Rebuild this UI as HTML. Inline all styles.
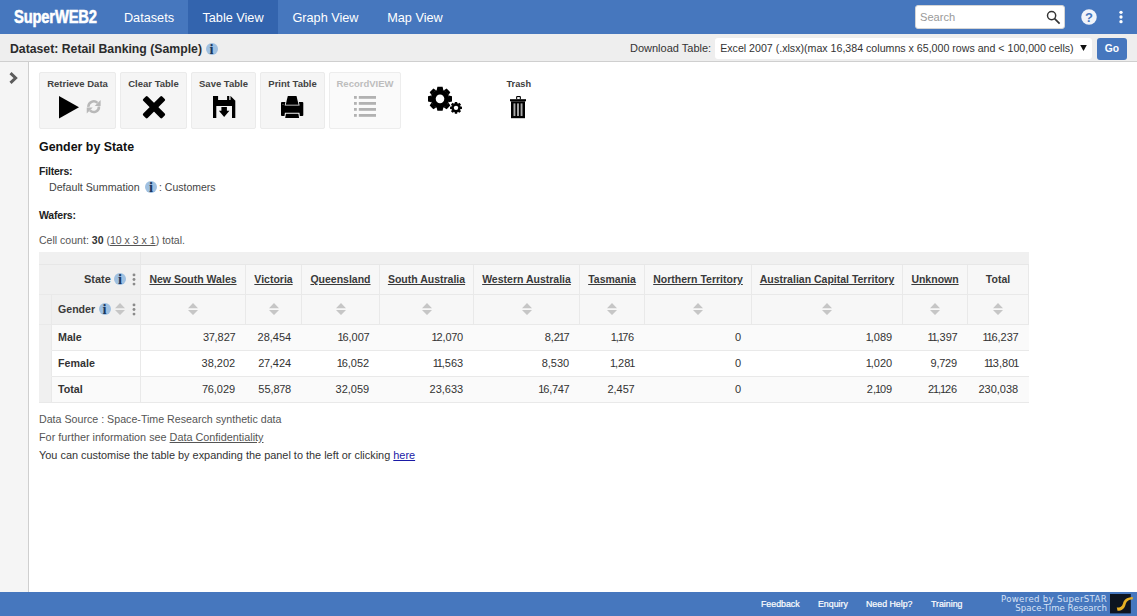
<!DOCTYPE html>
<html lang="en">
<head>
<meta charset="utf-8">
<title>SuperWEB2 - Table View</title>
<style>
*{box-sizing:border-box;margin:0;padding:0}
html,body{width:1137px;height:616px;overflow:hidden;background:#fff}
body{font-family:"Liberation Sans",sans-serif;font-size:11px;color:#333;position:relative}
a{color:inherit}
.abs{position:absolute;white-space:nowrap}
/* top nav */
#nav{position:absolute;left:0;top:0;width:1137px;height:34px;background:#4677be}
#logo{position:absolute;left:13.6px;top:5.5px;font-weight:bold;font-size:18px;line-height:22px;color:#fff;-webkit-text-stroke:.55px #fff;transform:scaleX(.818);transform-origin:0 50%;letter-spacing:-.2px}
.tab{position:absolute;top:0;height:34px;line-height:36px;color:#fff;font-size:12.7px;text-align:center}
.tab.on{background:#3364ae}
#search{position:absolute;left:915px;top:5px;width:150px;height:24px;background:#fff;border-radius:3px;border:1px solid #d5d5d5}
#search span{position:absolute;left:4px;top:0;line-height:22px;font-size:11.1px;color:#9a9a9a}
/* sub header */
#sub{position:absolute;left:0;top:34px;width:1137px;height:28px;background:#eeeeee;border-bottom:1px solid #cfcfcf}
#dsname{position:absolute;left:10px;top:1px;line-height:29px;font-size:12.25px;font-weight:bold;color:#2b2b2b}
#dl{position:absolute;left:630px;top:0;line-height:29px;font-size:11px;color:#333}
#sel{position:absolute;left:715.4px;top:3.8px;width:376.8px;height:21.7px;background:#fff;border-radius:3px;font-size:10.63px;line-height:20.4px;padding-left:4.8px;color:#333;overflow:hidden;white-space:nowrap}
#go{position:absolute;left:1097px;top:3.8px;width:30px;height:22px;background:#4677be;border-radius:3px;color:#fff;font-weight:bold;font-size:10.3px;line-height:21px;text-align:center}
/* sidebar */
#side{position:absolute;left:0;top:62px;width:29px;height:530px;background:#f5f5f5;border-right:1px solid #cfcfcf}
/* toolbar */
.btn{position:absolute;top:72px;height:57px;background:#f5f5f5;border:1px solid #ebebeb;border-radius:2px;text-align:center;font-size:9.5px;color:#424242;font-weight:bold}
.btn .lb{display:block;margin-top:5px;line-height:12px}
.btn.dis{background:#fafafa;border-color:#ededed;color:#bdbdbd}
.ico{position:absolute}
/* footer */
#foot{position:absolute;left:0;top:592px;width:1137px;height:24px;background:#4677be}
#foot .fl{position:absolute;top:0;line-height:24px;color:#fff;font-size:8.8px;-webkit-text-stroke:.2px #fff}

/* content */
.t{position:absolute;white-space:nowrap;line-height:14px}
.info{position:absolute;width:12px;height:12px;border-radius:6px;background:#9fc0e1;color:#1b3860;font-family:"Liberation Serif",serif;font-weight:bold;font-size:14.5px;line-height:12.8px;text-align:center;overflow:hidden}
/* table */
.c{position:absolute;border-right:1px solid #e9e9e9;border-bottom:1px solid #e9e9e9}
.h{background:#f7f7f7;text-align:center;font-weight:bold;font-size:10.5px;color:#3a3a3a;line-height:29px;white-space:nowrap}
.h u{text-decoration:underline}
.n{text-align:right;padding-right:10.8px;border-right:none;font-size:11px;color:#333;line-height:25px;white-space:nowrap}
.r1{background:#fafafa}.r2{background:#fff}
.rl{text-align:left;padding-left:6px;font-weight:bold;font-size:10.7px;line-height:25px;color:#333}
.sa{position:absolute;width:10px;height:12px;left:50%;margin-left:-5px;top:8px}
.kb{position:absolute;width:4px;height:13px}
#foot .pw{position:absolute;right:30px;white-space:nowrap;font-family:"DejaVu Sans",sans-serif;font-size:8.6px;line-height:11px;color:#d6e1f5;letter-spacing:.45px}
.n i{font-style:normal;margin:0 -1.1px}.n b{font-weight:normal;margin:0 -.4px}
</style>
</head>
<body>
<div id="nav">
  <div id="logo">SuperWEB2</div>
  <div class="tab" style="left:110px;width:78px">Datasets</div>
  <div class="tab on" style="left:188px;width:90px">Table View</div>
  <div class="tab" style="left:278px;width:95px">Graph View</div>
  <div class="tab" style="left:373px;width:84px">Map View</div>
  <div id="search"><span>Search</span></div>
  <svg class="ico" style="left:1046px;top:9.5px" width="15" height="15" viewBox="0 0 15 15"><circle cx="5.6" cy="5.6" r="4.1" fill="none" stroke="#333" stroke-width="1.45"/><path d="M8.6 8.6 L13.6 13.6" stroke="#333" stroke-width="1.7" stroke-linecap="butt"/></svg>
  <svg class="ico" style="left:1081px;top:9px" width="16" height="16" viewBox="0 0 16 16"><circle cx="8" cy="8" r="7.75" fill="#f1f4fa"/><text x="8" y="12.6" text-anchor="middle" font-family="Liberation Sans, sans-serif" font-weight="bold" font-size="13" fill="#4677be">?</text></svg>
  <svg class="ico" style="left:1118px;top:10px" width="6" height="14" viewBox="0 0 6 14"><circle cx="3" cy="2.3" r="1.65" fill="#fff"/><circle cx="3" cy="7" r="1.65" fill="#fff"/><circle cx="3" cy="11.7" r="1.65" fill="#fff"/></svg>
</div>
<div id="sub">
  <div id="dsname">Dataset: Retail Banking (Sample)</div>
  <div class="info" style="left:205.5px;top:9px">i</div>
  <div id="dl">Download Table:</div>
  <div id="sel">Excel 2007 (.xlsx)(max 16,384 columns x 65,000 rows and &lt; 100,000 cells)</div>
  <svg class="ico" style="left:1079.5px;top:10.8px" width="7" height="6" viewBox="0 0 7 6"><path d="M0.2 0.1 H6.8 L3.5 5.9 Z" fill="#111"/></svg>
  <div id="go">Go</div>
</div>
<div id="side"><svg class="ico" style="left:9px;top:10px" width="9" height="12" viewBox="0 0 9 12"><path d="M1.5 1.2 L6.6 6 L1.5 10.8" fill="none" stroke="#5c5c5c" stroke-width="3"/></svg></div>

<!-- toolbar -->
<div class="btn" style="left:39px;width:77px"><span class="lb">Retrieve Data</span>
  <svg class="ico" style="left:19px;top:23px" width="21" height="23" viewBox="0 0 21 23"><path d="M0 0 L20 11.25 L0 22.5 Z" fill="#000"/></svg>
  <svg class="ico" style="left:46.3px;top:26.3px" width="15.4" height="15.4" viewBox="0 0 14 14"><g fill="none" stroke="#b8b8b8" stroke-width="2.3"><path d="M2.2 7.2 A4.8 4.8 0 0 1 10.4 3.6"/><path d="M11.8 6.8 A4.8 4.8 0 0 1 3.6 10.4"/></g><path d="M13.3 0.9 V6.3 H7.9 Z" fill="#b8b8b8"/><path d="M0.7 13.1 V7.7 H6.1 Z" fill="#b8b8b8"/></svg>
</div>
<div class="btn" style="left:120px;width:67px"><span class="lb">Clear Table</span>
  <svg class="ico" style="left:20.5px;top:22px" width="24" height="24" viewBox="0 0 24 24"><g transform="translate(12 12.2)" fill="#000"><rect x="-13.4" y="-3.1" width="26.8" height="6.2" rx="1.3" transform="rotate(45)"/><rect x="-13.4" y="-3.1" width="26.8" height="6.2" rx="1.3" transform="rotate(-45)"/></g></svg>
</div>
<div class="btn" style="left:191px;width:65px"><span class="lb">Save Table</span>
  <svg class="ico" style="left:20.9px;top:23px" width="23" height="23" viewBox="0 0 23 23"><path d="M0 0 H17.6 L22.3 4.7 V22 H0 Z" fill="#000"/><rect x="5.1" y="-1" width="12.4" height="5" fill="#f5f5f5"/><rect x="14.1" y="0" width="2.2" height="4" fill="#000"/><rect x="3.3" y="10" width="15.7" height="13" fill="#f5f5f5"/><path d="M8.4 11 H13.9 V14.8 H16.4 L11.15 21 L5.9 14.8 H8.4 Z" fill="#000"/></svg>
</div>
<div class="btn" style="left:260px;width:65px"><span class="lb">Print Table</span>
  <svg class="ico" style="left:19.9px;top:23px" width="23" height="23" viewBox="0 0 23 23"><rect x="0" y="6.1" width="22.3" height="13.8" rx="0.9" fill="#000"/><path d="M5.9 -1 H16.4 L18.6 9.5 H3.7 Z" fill="#f5f5f5"/><path d="M6.8 0 H15.5 L17.6 8.7 H4.7 Z" fill="#000"/><path d="M3.9 16.8 H18.4 L19.2 23 H3.1 Z" fill="#f5f5f5"/><path d="M4.9 17.7 H17.4 L18.1 22 H4.2 Z" fill="#000"/><rect x="1.5" y="8" width="1" height="1" fill="#777"/></svg>
</div>
<div class="btn dis" style="left:329px;width:72px"><span class="lb">RecordVIEW</span>
  <svg class="ico" style="left:24px;top:23px" width="22" height="21" viewBox="0 0 22 21"><g fill="#b2b2b2"><rect x="0" y="0" width="2.8" height="2.8"/><rect x="4.8" y="0" width="17.2" height="2.8"/><rect x="0" y="6" width="2.8" height="2.8"/><rect x="4.8" y="6" width="17.2" height="2.8"/><rect x="0" y="12" width="2.8" height="2.8"/><rect x="4.8" y="12" width="17.2" height="2.8"/><rect x="0" y="18" width="2.8" height="2.8"/><rect x="4.8" y="18" width="17.2" height="2.8"/></g></svg>
</div>
<svg class="ico" id="gears" style="left:427px;top:86px" width="36" height="29" viewBox="0 0 36 29">
  <g transform="translate(13 12.85)" fill="#000"><circle r="9.4"/><path transform="rotate(0.0)" d="M-3.30 -8.80 L-2.60 -12.00 H2.60 L3.30 -8.80 Z"/><path transform="rotate(45.0)" d="M-3.30 -8.80 L-2.60 -12.00 H2.60 L3.30 -8.80 Z"/><path transform="rotate(90.0)" d="M-3.30 -8.80 L-2.60 -12.00 H2.60 L3.30 -8.80 Z"/><path transform="rotate(135.0)" d="M-3.30 -8.80 L-2.60 -12.00 H2.60 L3.30 -8.80 Z"/><path transform="rotate(180.0)" d="M-3.30 -8.80 L-2.60 -12.00 H2.60 L3.30 -8.80 Z"/><path transform="rotate(225.0)" d="M-3.30 -8.80 L-2.60 -12.00 H2.60 L3.30 -8.80 Z"/><path transform="rotate(270.0)" d="M-3.30 -8.80 L-2.60 -12.00 H2.60 L3.30 -8.80 Z"/><path transform="rotate(315.0)" d="M-3.30 -8.80 L-2.60 -12.00 H2.60 L3.30 -8.80 Z"/><circle r="4.3" fill="#fff"/></g>
  <g transform="translate(29 21.85)" fill="#000"><circle r="4.5"/><path transform="rotate(0.0)" d="M-1.50 -3.90 L-1.10 -5.95 H1.10 L1.50 -3.90 Z"/><path transform="rotate(45.0)" d="M-1.50 -3.90 L-1.10 -5.95 H1.10 L1.50 -3.90 Z"/><path transform="rotate(90.0)" d="M-1.50 -3.90 L-1.10 -5.95 H1.10 L1.50 -3.90 Z"/><path transform="rotate(135.0)" d="M-1.50 -3.90 L-1.10 -5.95 H1.10 L1.50 -3.90 Z"/><path transform="rotate(180.0)" d="M-1.50 -3.90 L-1.10 -5.95 H1.10 L1.50 -3.90 Z"/><path transform="rotate(225.0)" d="M-1.50 -3.90 L-1.10 -5.95 H1.10 L1.50 -3.90 Z"/><path transform="rotate(270.0)" d="M-1.50 -3.90 L-1.10 -5.95 H1.10 L1.50 -3.90 Z"/><path transform="rotate(315.0)" d="M-1.50 -3.90 L-1.10 -5.95 H1.10 L1.50 -3.90 Z"/><circle r="2.2" fill="#fff"/></g>
</svg>
<div class="t" style="left:506.5px;top:77.7px;font-size:9.2px;font-weight:bold;color:#3c3c3c;line-height:12px">Trash</div>
<svg class="ico" style="left:510px;top:95.8px" width="16" height="23" viewBox="0 0 16 23"><rect x="6.1" y="0" width="4.8" height="3.4" rx="1" fill="#000"/><rect x="7.2" y="1.1" width="2.6" height="2.4" fill="#fff"/><rect x="0" y="3.2" width="16" height="2.1" fill="#000"/><path d="M1 5.3 H15 V22.2 H1 Z" fill="#000"/><g fill="#a8a8a8"><rect x="3.5" y="7.4" width="1.9" height="12.6"/><rect x="7.05" y="7.4" width="1.9" height="12.6"/><rect x="10.6" y="7.4" width="1.9" height="12.6"/></g></svg>
<!-- content -->
<div class="t" style="left:39px;top:139px;font-size:12.4px;font-weight:bold;color:#111;line-height:16px">Gender by State</div>
<div class="t" style="left:39px;top:164px;font-size:10.5px;letter-spacing:-.2px;font-weight:bold;color:#222">Filters:</div>
<div class="t" style="left:49px;top:180px;font-size:10.67px;color:#444">Default Summation</div>
<div class="info" style="left:145px;top:181px">i</div>
<div class="t" style="left:159px;top:180px;font-size:10.5px;color:#444">: Customers</div>
<div class="t" style="left:39px;top:208px;font-size:10.5px;letter-spacing:-.2px;font-weight:bold;color:#222">Wafers:</div>
<div class="t" style="left:39px;top:233px;font-size:10.55px;color:#555">Cell count: <b style="color:#333">30</b> (<u>10 x 3 x 1</u>) total.</div>
<!-- table -->
<div class="c " style="left:39px;top:252px;width:102px;height:13px;background:#f0f0f0;border-color:#e7e7e7"></div>
<div class="c " style="left:141px;top:252px;width:888px;height:13px;background:#f0f0f0;border-color:#e7e7e7;border-right:none"></div>
<div class="c h" style="left:39px;top:265px;width:102px;height:30px;background:#f0f0f0"><span class="t" style="left:45px;top:7px;font-size:11px">State</span><div class="info" style="left:75px;top:8px">i</div><svg class="kb" style="left:92.5px;top:8px" viewBox="0 0 4 13"><circle cx="2" cy="1.9" r="1.45" fill="#8a8a8a"/><circle cx="2" cy="6.5" r="1.45" fill="#8a8a8a"/><circle cx="2" cy="11.1" r="1.45" fill="#8a8a8a"/></svg></div>
<div class="c " style="left:39px;top:295px;width:13px;height:30px;background:#f0f0f0"></div>
<div class="c h" style="left:52px;top:295px;width:89px;height:30px;background:#f0f0f0"><span class="t" style="left:6px;top:7px;font-size:10.6px">Gender</span><div class="info" style="left:46.5px;top:8px">i</div><svg class="sa" style="left:62.5px;margin-left:0;top:8px" viewBox="0 0 10 12"><path d="M5 0 L10 5.3 H0 Z M0 7 H10 L5 12 Z" fill="#c6c6c6"/></svg><svg class="kb" style="left:79.5px;top:8px" viewBox="0 0 4 13"><circle cx="2" cy="1.9" r="1.45" fill="#8a8a8a"/><circle cx="2" cy="6.5" r="1.45" fill="#8a8a8a"/><circle cx="2" cy="11.1" r="1.45" fill="#8a8a8a"/></svg></div>
<div class="c h" style="left:141px;top:265px;width:105px;height:30px;"><u>New South Wales</u></div>
<div class="c h" style="left:141px;top:295px;width:105px;height:30px;"><svg class="sa" style="" viewBox="0 0 10 12"><path d="M5 0 L10 5.3 H0 Z M0 7 H10 L5 12 Z" fill="#c6c6c6"/></svg></div>
<div class="c h" style="left:246px;top:265px;width:56px;height:30px;"><u>Victoria</u></div>
<div class="c h" style="left:246px;top:295px;width:56px;height:30px;"><svg class="sa" style="" viewBox="0 0 10 12"><path d="M5 0 L10 5.3 H0 Z M0 7 H10 L5 12 Z" fill="#c6c6c6"/></svg></div>
<div class="c h" style="left:302px;top:265px;width:78px;height:30px;"><u>Queensland</u></div>
<div class="c h" style="left:302px;top:295px;width:78px;height:30px;"><svg class="sa" style="" viewBox="0 0 10 12"><path d="M5 0 L10 5.3 H0 Z M0 7 H10 L5 12 Z" fill="#c6c6c6"/></svg></div>
<div class="c h" style="left:380px;top:265px;width:94px;height:30px;"><u>South Australia</u></div>
<div class="c h" style="left:380px;top:295px;width:94px;height:30px;"><svg class="sa" style="" viewBox="0 0 10 12"><path d="M5 0 L10 5.3 H0 Z M0 7 H10 L5 12 Z" fill="#c6c6c6"/></svg></div>
<div class="c h" style="left:474px;top:265px;width:106px;height:30px;"><u>Western Australia</u></div>
<div class="c h" style="left:474px;top:295px;width:106px;height:30px;"><svg class="sa" style="" viewBox="0 0 10 12"><path d="M5 0 L10 5.3 H0 Z M0 7 H10 L5 12 Z" fill="#c6c6c6"/></svg></div>
<div class="c h" style="left:580px;top:265px;width:65px;height:30px;"><u>Tasmania</u></div>
<div class="c h" style="left:580px;top:295px;width:65px;height:30px;"><svg class="sa" style="" viewBox="0 0 10 12"><path d="M5 0 L10 5.3 H0 Z M0 7 H10 L5 12 Z" fill="#c6c6c6"/></svg></div>
<div class="c h" style="left:645px;top:265px;width:107px;height:30px;"><u>Northern Territory</u></div>
<div class="c h" style="left:645px;top:295px;width:107px;height:30px;"><svg class="sa" style="" viewBox="0 0 10 12"><path d="M5 0 L10 5.3 H0 Z M0 7 H10 L5 12 Z" fill="#c6c6c6"/></svg></div>
<div class="c h" style="left:752px;top:265px;width:151px;height:30px;"><u>Australian Capital Territory</u></div>
<div class="c h" style="left:752px;top:295px;width:151px;height:30px;"><svg class="sa" style="" viewBox="0 0 10 12"><path d="M5 0 L10 5.3 H0 Z M0 7 H10 L5 12 Z" fill="#c6c6c6"/></svg></div>
<div class="c h" style="left:903px;top:265px;width:65px;height:30px;"><u>Unknown</u></div>
<div class="c h" style="left:903px;top:295px;width:65px;height:30px;"><svg class="sa" style="" viewBox="0 0 10 12"><path d="M5 0 L10 5.3 H0 Z M0 7 H10 L5 12 Z" fill="#c6c6c6"/></svg></div>
<div class="c h" style="left:968px;top:265px;width:61px;height:30px;">Total</div>
<div class="c h" style="left:968px;top:295px;width:61px;height:30px;"><svg class="sa" style="" viewBox="0 0 10 12"><path d="M5 0 L10 5.3 H0 Z M0 7 H10 L5 12 Z" fill="#c6c6c6"/></svg></div>
<div class="c " style="left:39px;top:325px;width:13px;height:26px;background:#f0f0f0;border-bottom-color:#f0f0f0"></div>
<div class="c rl r1" style="left:52px;top:325px;width:89px;height:26px;">Male</div>
<div class="c n r1" style="left:141px;top:325px;width:105px;height:26px;">3<b>7</b>,82<b>7</b></div>
<div class="c n r1" style="left:246px;top:325px;width:56px;height:26px;">28,454</div>
<div class="c n r1" style="left:302px;top:325px;width:78px;height:26px;"><i>1</i>6,00<b>7</b></div>
<div class="c n r1" style="left:380px;top:325px;width:94px;height:26px;"><i>1</i>2,0<b>7</b>0</div>
<div class="c n r1" style="left:474px;top:325px;width:106px;height:26px;">8,2<i>1</i><b>7</b></div>
<div class="c n r1" style="left:580px;top:325px;width:65px;height:26px;"><i>1</i>,<i>1</i><b>7</b>6</div>
<div class="c n r1" style="left:645px;top:325px;width:107px;height:26px;">0</div>
<div class="c n r1" style="left:752px;top:325px;width:151px;height:26px;"><i>1</i>,089</div>
<div class="c n r1" style="left:903px;top:325px;width:65px;height:26px;"><i>1</i><i>1</i>,39<b>7</b></div>
<div class="c n r1" style="left:968px;top:325px;width:61px;height:26px;"><i>1</i><i>1</i>6,23<b>7</b></div>
<div class="c " style="left:39px;top:351px;width:13px;height:26px;background:#f0f0f0;border-bottom-color:#f0f0f0"></div>
<div class="c rl r2" style="left:52px;top:351px;width:89px;height:26px;">Female</div>
<div class="c n r2" style="left:141px;top:351px;width:105px;height:26px;">38,202</div>
<div class="c n r2" style="left:246px;top:351px;width:56px;height:26px;">2<b>7</b>,424</div>
<div class="c n r2" style="left:302px;top:351px;width:78px;height:26px;"><i>1</i>6,052</div>
<div class="c n r2" style="left:380px;top:351px;width:94px;height:26px;"><i>1</i><i>1</i>,563</div>
<div class="c n r2" style="left:474px;top:351px;width:106px;height:26px;">8,530</div>
<div class="c n r2" style="left:580px;top:351px;width:65px;height:26px;"><i>1</i>,28<i>1</i></div>
<div class="c n r2" style="left:645px;top:351px;width:107px;height:26px;">0</div>
<div class="c n r2" style="left:752px;top:351px;width:151px;height:26px;"><i>1</i>,020</div>
<div class="c n r2" style="left:903px;top:351px;width:65px;height:26px;">9,<b>7</b>29</div>
<div class="c n r2" style="left:968px;top:351px;width:61px;height:26px;"><i>1</i><i>1</i>3,80<i>1</i></div>
<div class="c " style="left:39px;top:377px;width:13px;height:26px;background:#f0f0f0"></div>
<div class="c rl r1" style="left:52px;top:377px;width:89px;height:26px;">Total</div>
<div class="c n r1" style="left:141px;top:377px;width:105px;height:26px;"><b>7</b>6,029</div>
<div class="c n r1" style="left:246px;top:377px;width:56px;height:26px;">55,8<b>7</b>8</div>
<div class="c n r1" style="left:302px;top:377px;width:78px;height:26px;">32,059</div>
<div class="c n r1" style="left:380px;top:377px;width:94px;height:26px;">23,633</div>
<div class="c n r1" style="left:474px;top:377px;width:106px;height:26px;"><i>1</i>6,<b>7</b>4<b>7</b></div>
<div class="c n r1" style="left:580px;top:377px;width:65px;height:26px;">2,45<b>7</b></div>
<div class="c n r1" style="left:645px;top:377px;width:107px;height:26px;">0</div>
<div class="c n r1" style="left:752px;top:377px;width:151px;height:26px;">2,<i>1</i>09</div>
<div class="c n r1" style="left:903px;top:377px;width:65px;height:26px;">2<i>1</i>,<i>1</i>26</div>
<div class="c n r1" style="left:968px;top:377px;width:61px;height:26px;">230,038</div>
<!-- notes -->
<div class="t" style="left:39px;top:412px;font-size:10.66px;color:#555">Data Source : Space-Time Research synthetic data</div>
<div class="t" style="left:39px;top:430px;font-size:10.84px;color:#555">For further information see <u>Data Confidentiality</u></div>
<div class="t" style="left:39px;top:448px;font-size:10.91px;color:#333">You can customise the table by expanding the panel to the left or clicking <u style="color:#1a1aa6">here</u></div>

<div id="foot">
  <div class="fl" style="left:761px">Feedback</div>
  <div class="fl" style="left:818px">Enquiry</div>
  <div class="fl" style="left:866px">Need Help?</div>
  <div class="fl" style="left:931px">Training</div>
  <div class="pw" style="top:2px;letter-spacing:.32px">Powered by SuperSTAR</div>
  <div class="pw" style="top:11px;letter-spacing:0">Space-Time Research</div>
  <svg class="ico" style="left:1110px;top:2px" width="24" height="20" viewBox="0 0 24 20"><rect width="20.8" height="19.4" fill="#0d1420"/><path d="M6.8 13.6 C10.4 13.4 12 12.4 13 9.4 C14.1 5.8 16 3.5 22.8 3 L22.8 5.3 C18.2 5.7 16.5 7.4 15.5 10.8 C14.3 15 11.6 16.9 7.5 16.8 Z" fill="#e6b024"/></svg>
</div>
</body>
</html>
